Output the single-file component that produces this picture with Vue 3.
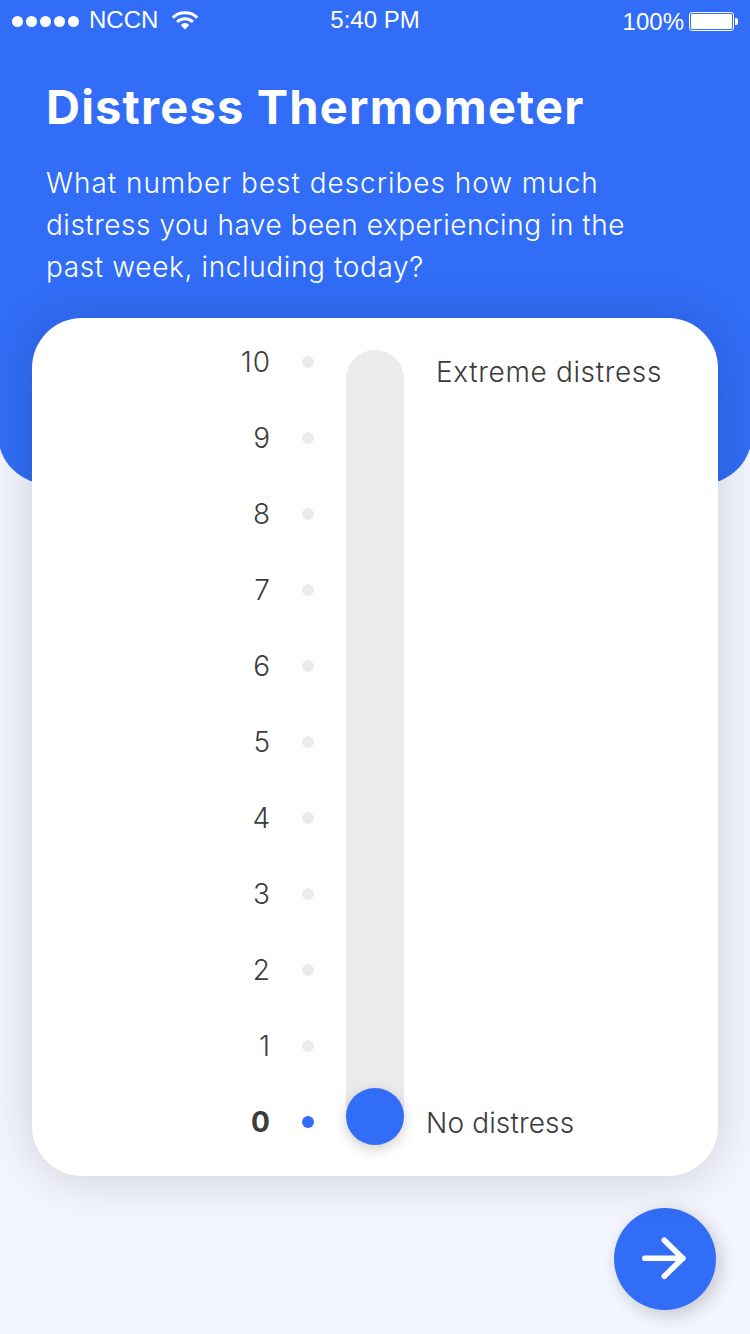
<script setup>
const question = [
  { text: 'What number best describes how much', cls: 'q1' },
  { text: 'distress you have been experiencing in the', cls: 'q2' },
  { text: 'past week, including today?', cls: 'q3' },
]
const levels = [10, 9, 8, 7, 6, 5, 4, 3, 2, 1, 0]
const selected = 0
</script>

<template>
  <main class="screen">
    <header class="hero">
      <div class="status">
        <div class="carrier">
          <span class="signal"><i v-for="n in 5" :key="n"></i></span>
          <span class="network">NCCN</span>
          <svg class="wifi" width="28" height="20" viewBox="0 0 28 20">
            <g fill="none" stroke="#fff" stroke-width="2.9">
              <path d="M1.8 6.6C8.3.1 19.7.1 26.2 6.6" />
              <path d="M6.1 11C10.5 6.7 17.5 6.7 21.9 11" />
            </g>
            <path d="M9.8 14.2C12 11.2 16 11.2 18.2 14.2L14 18.6Z" fill="#fff" />
          </svg>
        </div>
        <span class="time">5:40 PM</span>
        <div class="power">
          <span class="percent">100%</span>
          <svg width="49" height="20" viewBox="0 0 49 20">
            <rect x=".5" y=".5" width="44" height="18" rx="2.5" fill="none" stroke="#fff" />
            <rect x="2" y="2" width="41" height="15" rx="1" fill="#fff" />
            <path d="M46 6h1q2 0 2 2v3q0 2-2 2h-1z" fill="#fff" />
          </svg>
        </div>
      </div>
      <h1>Distress Thermometer</h1>
      <p class="question">
        <span v-for="line in question" :key="line.cls" :class="line.cls">{{ line.text }}</span>
      </p>
    </header>

    <section class="card">
      <ul class="scale">
        <li v-for="n in levels" :key="n" :class="{ active: n === selected }">
          <span>{{ n }}</span><i></i>
        </li>
      </ul>
      <div class="track"><div class="thumb"></div></div>
      <div class="captions">
        <span class="extreme">Extreme distress</span>
        <span class="none">No distress</span>
      </div>
    </section>

    <footer>
      <button class="next" aria-label="Next">
        <svg width="102" height="102" viewBox="0 0 102 102">
          <path d="M30.8 50.3H69M50.3 32.2L68.7 50.3L50.3 68.3" fill="none" stroke="#fff" stroke-width="5.6" stroke-linecap="round" stroke-linejoin="round" />
        </svg>
      </button>
    </footer>
  </main>
</template>

<style>
body { margin: 0; background: #f3f6ff; }
</style>

<style scoped>
.screen {
  width: 750px;
  height: 1334px;
  overflow: hidden;
  background: #f3f6ff;
  color: #3c3c3d;
  font-family: Inter, "Noto Sans", sans-serif;
}
.hero {
  box-sizing: border-box;
  height: 484px;
  margin: 0 -2px;
  padding: 0 2px;
  border-radius: 0 0 50px 50px;
  background: #316df6;
  color: #fff;
}
.status {
  display: grid;
  grid-template-columns: 1fr auto 1fr;
  align-items: start;
  height: 40px;
  padding: 0 12px;
  font: 24px/40px "Liberation Sans", Arial, sans-serif;
}
.carrier { display: flex; align-items: center; height: 40px; }
.signal { display: flex; gap: 3px; padding-top: 3px; }
.signal i { width: 11px; height: 11px; border-radius: 50%; background: #fff; }
.network { margin-left: 10px; }
.wifi { margin: 2px 0 0 13px; }
.power { display: flex; justify-content: flex-end; align-items: center; gap: 5px; height: 40px; padding-top: 2px; }
.power svg { flex: none; }
h1 {
  margin: 37px 0 0 46px;
  font-size: 47px;
  line-height: 60px;
  font-weight: 700;
  letter-spacing: 1.2px;
  white-space: nowrap;
}
.question { margin: 25px 0 0 46px; font-size: 28px; line-height: 42px; font-weight: 300; }
.question span { display: block; white-space: nowrap; }
.q1 { letter-spacing: .96px; }
.q2 { letter-spacing: .51px; }
.q3 { letter-spacing: .63px; }
.card {
  position: relative;
  box-sizing: border-box;
  display: flex;
  width: 686px;
  height: 858px;
  margin: -166px 0 0 32px;
  border-radius: 50px;
  background: #fff;
  box-shadow: 0 2px 50px rgba(0, 0, 0, .16);
  font-size: 28px;
  font-weight: 300;
}
.scale { width: 282px; margin: 0; padding: 6px 0 0; list-style: none; }
.scale li { display: flex; justify-content: flex-end; align-items: center; gap: 31px; height: 76px; letter-spacing: 1px; }
.scale i { width: 12px; height: 12px; border-radius: 50%; background: #ebebeb; }
.scale .active { font-weight: 700; }
.scale .active i { background: #316df6; }
.track {
  display: flex;
  align-items: flex-end;
  width: 58px;
  height: 795px;
  margin: 32px 0 0 32px;
  border-radius: 29px;
  background: #ebebeb;
}
.thumb { width: 58px; height: 57px; border-radius: 50%; background: #316df6; box-shadow: 0 4px 14px rgba(0, 0, 0, .2); }
.captions { display: flex; flex-direction: column; justify-content: space-between; padding: 34px 0 33px 22px; line-height: 40px; white-space: nowrap; }
.extreme { margin-left: 10px; letter-spacing: .65px; }
.none { letter-spacing: .15px; }
footer { display: flex; justify-content: flex-end; padding: 32px 34px 0 0; }
.next {
  width: 102px;
  height: 102px;
  padding: 0;
  border: 0;
  border-radius: 50%;
  background: #316df6;
  box-shadow: 4px 5px 18px rgba(0, 0, 0, .2);
}
.next svg { display: block; }
</style>
